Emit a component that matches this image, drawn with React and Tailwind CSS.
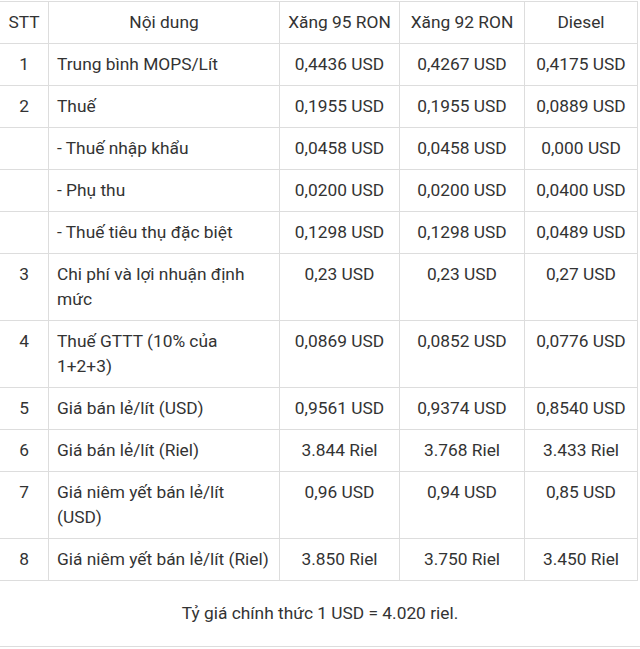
import React from "react";

const rows = [
  ["1", "Trung bình MOPS/Lít", "0,4436 USD", "0,4267 USD", "0,4175 USD"],
  ["2", "Thuế", "0,1955 USD", "0,1955 USD", "0,0889 USD"],
  ["", "- Thuế nhập khẩu", "0,0458 USD", "0,0458 USD", "0,000 USD"],
  ["", "- Phụ thu", "0,0200 USD", "0,0200 USD", "0,0400 USD"],
  ["", "- Thuế tiêu thụ đặc biệt", "0,1298 USD", "0,1298 USD", "0,0489 USD"],
  ["3", "Chi phí và lợi nhuận định mức", "0,23 USD", "0,23 USD", "0,27 USD"],
  ["4", "Thuế GTTT (10% của 1+2+3)", "0,0869 USD", "0,0852 USD", "0,0776 USD"],
  ["5", "Giá bán lẻ/lít (USD)", "0,9561 USD", "0,9374 USD", "0,8540 USD"],
  ["6", "Giá bán lẻ/lít (Riel)", "3.844 Riel", "3.768 Riel", "3.433 Riel"],
  ["7", "Giá niêm yết bán lẻ/lít (USD)", "0,96 USD", "0,94 USD", "0,85 USD"],
  ["8", "Giá niêm yết bán lẻ/lít (Riel)", "3.850 Riel", "3.750 Riel", "3.450 Riel"],
];

const cell = "border border-[#dddddd] px-2 py-2 align-top";

export default function App() {
  return (
    <div className="w-[640px] bg-white pt-px text-[17.33px] leading-[25px] text-[#333333] font-['Roboto',sans-serif]">
      <table className="table-fixed border-collapse w-[638px] -ml-px">
        <colgroup>
          <col className="w-[49px]" />
          <col className="w-[231px]" />
          <col className="w-[120px]" />
          <col className="w-[125px]" />
          <col className="w-[113px]" />
        </colgroup>
        <thead>
          <tr>
            <th className={`${cell} font-normal text-center`}>STT</th>
            <th className={`${cell} font-normal text-center`}>Nội dung</th>
            <th className={`${cell} font-normal text-center`}>Xăng 95 RON</th>
            <th className={`${cell} font-normal text-center`}>Xăng 92 RON</th>
            <th className={`${cell} font-normal text-center`}>Diesel</th>
          </tr>
        </thead>
        <tbody>
          {rows.map((r, i) => (
            <tr key={i}>
              <td className={`${cell} text-center`}>{r[0]}</td>
              <td className={`${cell} text-left`}>{r[1]}</td>
              <td className={`${cell} text-center`}>{r[2]}</td>
              <td className={`${cell} text-center`}>{r[3]}</td>
              <td className={`${cell} text-center`}>{r[4]}</td>
            </tr>
          ))}
        </tbody>
      </table>
      <div className="border-b border-[#dddddd] pt-[20px] pb-[20px] text-center">
        Tỷ giá chính thức 1 USD = 4.020 riel.
      </div>
    </div>
  );
}
